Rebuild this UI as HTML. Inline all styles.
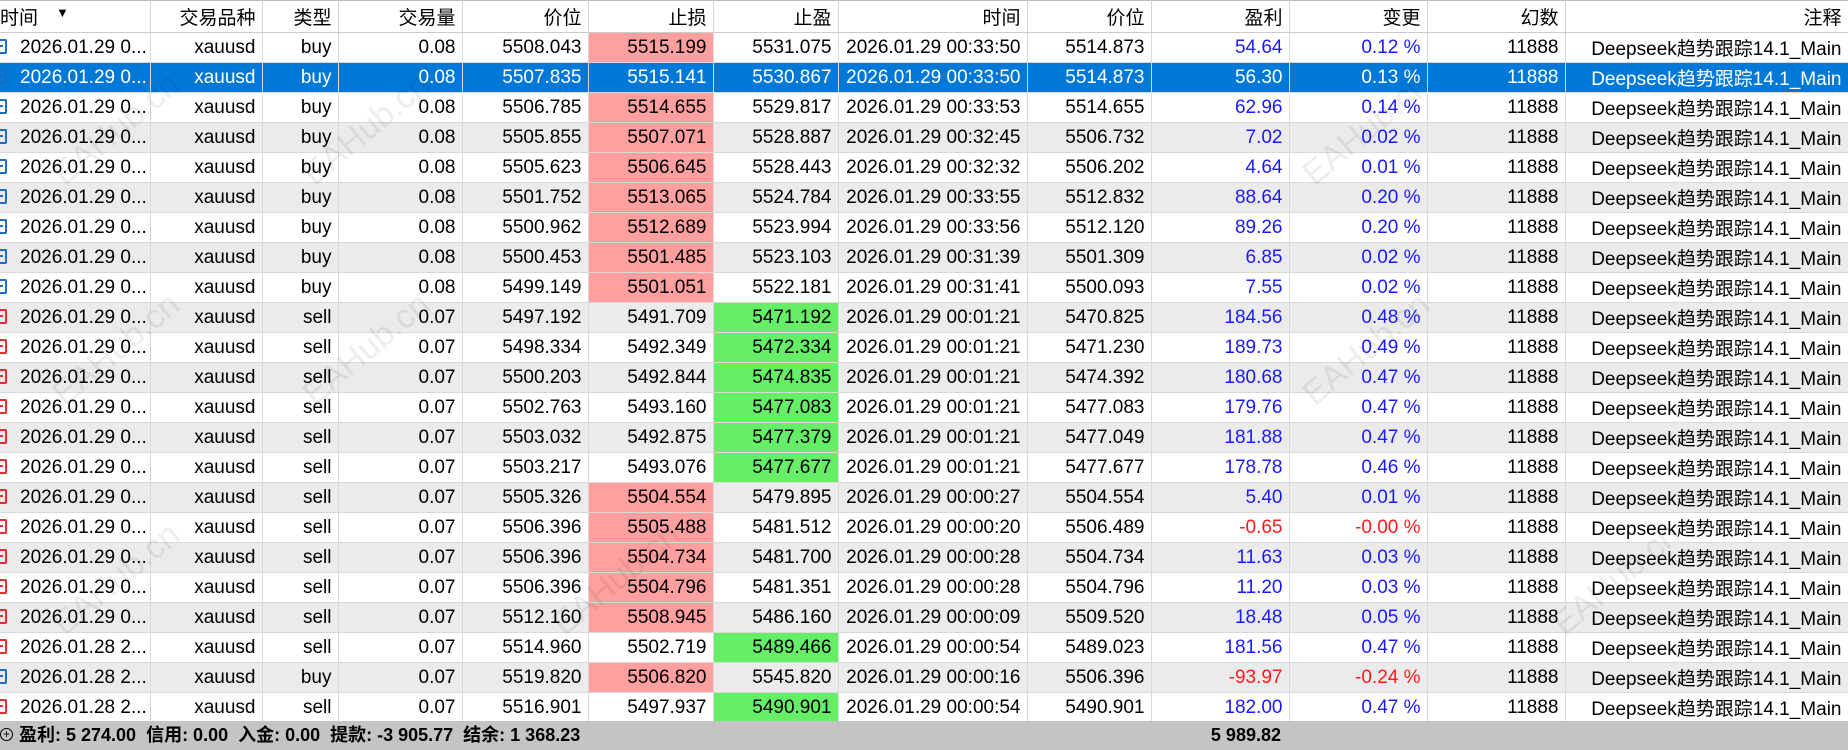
<!DOCTYPE html>
<html><head><meta charset="utf-8"><style>
body{margin:0;width:1848px;height:750px;overflow:hidden;background:#fff;font-family:"Liberation Sans","Noto Sans CJK SC",sans-serif;font-size:19px;color:#000;position:relative}
table{border-collapse:collapse;table-layout:fixed;position:absolute;left:0;top:0;width:1848px}
td,th{height:29px;padding:0 6px 0 0;border-right:1px solid #d9d9d9;border-bottom:1px solid #d9d9d9;text-align:right;white-space:nowrap;overflow:hidden;font-weight:normal}
th{height:31px;border-top:1px solid #bbb;border-bottom:1px solid #ccc;border-right:1px solid #d4d4d4}
td:first-child,th:first-child{text-align:left;padding-left:20px;position:relative}
th:first-child{padding-left:0}
tr:nth-child(odd) td{background:#ebebeb}
tr.sel td{background:#0078d7!important;color:#fff!important}
td.p{background:#ff9f9f!important}
td.g{background:#66ee66!important}
.b{color:#1a1aff}.r{color:#ff1a1a}
.ic{position:absolute;left:0;top:6px;width:7px;height:15px;border:2px solid #1e6fc4;border-left:none;border-radius:0 2px 2px 0;box-sizing:border-box}
.ic.s{border-color:#e03030}
.ic:after{content:"";position:absolute;left:0;top:4px;width:3px;height:2px;background:inherit;border-top:2px solid #1e6fc4}
.ic.s:after{border-top-color:#e03030}
.foot{position:absolute;left:0;top:721px;width:1848px;height:29px;background:#c4c4c4;font-weight:bold;line-height:29px;font-size:18px}
.wm{position:absolute;color:rgba(0,0,0,0.07);font-size:34px;transform:rotate(-40deg);pointer-events:none}
</style></head><body>
<table>
<colgroup><col style="width:150px"><col style="width:112px"><col style="width:76px"><col style="width:124px"><col style="width:126px"><col style="width:125px"><col style="width:125px"><col style="width:189px"><col style="width:124px"><col style="width:138px"><col style="width:138px"><col style="width:138px"><col style="width:283px"></colgroup>
<tr style="background:#fff"><th style="background:#fff">时间<span style="position:absolute;left:56px;top:4px;font-size:13px">▼</span></th><th style="background:#fff">交易品种</th><th style="background:#fff">类型</th><th style="background:#fff">交易量</th><th style="background:#fff">价位</th><th style="background:#fff">止损</th><th style="background:#fff">止盈</th><th style="background:#fff">时间</th><th style="background:#fff">价位</th><th style="background:#fff">盈利</th><th style="background:#fff">变更</th><th style="background:#fff">幻数</th><th style="background:#fff">注释</th></tr>
<tr><td><i class="ic"></i>2026.01.29 0...</td><td>xauusd</td><td>buy</td><td>0.08</td><td>5508.043</td><td class="p">5515.199</td><td>5531.075</td><td>2026.01.29 00:33:50</td><td>5514.873</td><td class="b">54.64</td><td class="b">0.12 %</td><td>11888</td><td>Deepseek趋势跟踪14.1_Main</td></tr>
<tr class="sel"><td><i class="ic"></i>2026.01.29 0...</td><td>xauusd</td><td>buy</td><td>0.08</td><td>5507.835</td><td>5515.141</td><td>5530.867</td><td>2026.01.29 00:33:50</td><td>5514.873</td><td>56.30</td><td>0.13 %</td><td>11888</td><td>Deepseek趋势跟踪14.1_Main</td></tr>
<tr><td><i class="ic"></i>2026.01.29 0...</td><td>xauusd</td><td>buy</td><td>0.08</td><td>5506.785</td><td class="p">5514.655</td><td>5529.817</td><td>2026.01.29 00:33:53</td><td>5514.655</td><td class="b">62.96</td><td class="b">0.14 %</td><td>11888</td><td>Deepseek趋势跟踪14.1_Main</td></tr>
<tr><td><i class="ic"></i>2026.01.29 0...</td><td>xauusd</td><td>buy</td><td>0.08</td><td>5505.855</td><td class="p">5507.071</td><td>5528.887</td><td>2026.01.29 00:32:45</td><td>5506.732</td><td class="b">7.02</td><td class="b">0.02 %</td><td>11888</td><td>Deepseek趋势跟踪14.1_Main</td></tr>
<tr><td><i class="ic"></i>2026.01.29 0...</td><td>xauusd</td><td>buy</td><td>0.08</td><td>5505.623</td><td class="p">5506.645</td><td>5528.443</td><td>2026.01.29 00:32:32</td><td>5506.202</td><td class="b">4.64</td><td class="b">0.01 %</td><td>11888</td><td>Deepseek趋势跟踪14.1_Main</td></tr>
<tr><td><i class="ic"></i>2026.01.29 0...</td><td>xauusd</td><td>buy</td><td>0.08</td><td>5501.752</td><td class="p">5513.065</td><td>5524.784</td><td>2026.01.29 00:33:55</td><td>5512.832</td><td class="b">88.64</td><td class="b">0.20 %</td><td>11888</td><td>Deepseek趋势跟踪14.1_Main</td></tr>
<tr><td><i class="ic"></i>2026.01.29 0...</td><td>xauusd</td><td>buy</td><td>0.08</td><td>5500.962</td><td class="p">5512.689</td><td>5523.994</td><td>2026.01.29 00:33:56</td><td>5512.120</td><td class="b">89.26</td><td class="b">0.20 %</td><td>11888</td><td>Deepseek趋势跟踪14.1_Main</td></tr>
<tr><td><i class="ic"></i>2026.01.29 0...</td><td>xauusd</td><td>buy</td><td>0.08</td><td>5500.453</td><td class="p">5501.485</td><td>5523.103</td><td>2026.01.29 00:31:39</td><td>5501.309</td><td class="b">6.85</td><td class="b">0.02 %</td><td>11888</td><td>Deepseek趋势跟踪14.1_Main</td></tr>
<tr><td><i class="ic"></i>2026.01.29 0...</td><td>xauusd</td><td>buy</td><td>0.08</td><td>5499.149</td><td class="p">5501.051</td><td>5522.181</td><td>2026.01.29 00:31:41</td><td>5500.093</td><td class="b">7.55</td><td class="b">0.02 %</td><td>11888</td><td>Deepseek趋势跟踪14.1_Main</td></tr>
<tr><td><i class="ic s"></i>2026.01.29 0...</td><td>xauusd</td><td>sell</td><td>0.07</td><td>5497.192</td><td>5491.709</td><td class="g">5471.192</td><td>2026.01.29 00:01:21</td><td>5470.825</td><td class="b">184.56</td><td class="b">0.48 %</td><td>11888</td><td>Deepseek趋势跟踪14.1_Main</td></tr>
<tr><td><i class="ic s"></i>2026.01.29 0...</td><td>xauusd</td><td>sell</td><td>0.07</td><td>5498.334</td><td>5492.349</td><td class="g">5472.334</td><td>2026.01.29 00:01:21</td><td>5471.230</td><td class="b">189.73</td><td class="b">0.49 %</td><td>11888</td><td>Deepseek趋势跟踪14.1_Main</td></tr>
<tr><td><i class="ic s"></i>2026.01.29 0...</td><td>xauusd</td><td>sell</td><td>0.07</td><td>5500.203</td><td>5492.844</td><td class="g">5474.835</td><td>2026.01.29 00:01:21</td><td>5474.392</td><td class="b">180.68</td><td class="b">0.47 %</td><td>11888</td><td>Deepseek趋势跟踪14.1_Main</td></tr>
<tr><td><i class="ic s"></i>2026.01.29 0...</td><td>xauusd</td><td>sell</td><td>0.07</td><td>5502.763</td><td>5493.160</td><td class="g">5477.083</td><td>2026.01.29 00:01:21</td><td>5477.083</td><td class="b">179.76</td><td class="b">0.47 %</td><td>11888</td><td>Deepseek趋势跟踪14.1_Main</td></tr>
<tr><td><i class="ic s"></i>2026.01.29 0...</td><td>xauusd</td><td>sell</td><td>0.07</td><td>5503.032</td><td>5492.875</td><td class="g">5477.379</td><td>2026.01.29 00:01:21</td><td>5477.049</td><td class="b">181.88</td><td class="b">0.47 %</td><td>11888</td><td>Deepseek趋势跟踪14.1_Main</td></tr>
<tr><td><i class="ic s"></i>2026.01.29 0...</td><td>xauusd</td><td>sell</td><td>0.07</td><td>5503.217</td><td>5493.076</td><td class="g">5477.677</td><td>2026.01.29 00:01:21</td><td>5477.677</td><td class="b">178.78</td><td class="b">0.46 %</td><td>11888</td><td>Deepseek趋势跟踪14.1_Main</td></tr>
<tr><td><i class="ic s"></i>2026.01.29 0...</td><td>xauusd</td><td>sell</td><td>0.07</td><td>5505.326</td><td class="p">5504.554</td><td>5479.895</td><td>2026.01.29 00:00:27</td><td>5504.554</td><td class="b">5.40</td><td class="b">0.01 %</td><td>11888</td><td>Deepseek趋势跟踪14.1_Main</td></tr>
<tr><td><i class="ic s"></i>2026.01.29 0...</td><td>xauusd</td><td>sell</td><td>0.07</td><td>5506.396</td><td class="p">5505.488</td><td>5481.512</td><td>2026.01.29 00:00:20</td><td>5506.489</td><td class="r">-0.65</td><td class="r">-0.00 %</td><td>11888</td><td>Deepseek趋势跟踪14.1_Main</td></tr>
<tr><td><i class="ic s"></i>2026.01.29 0...</td><td>xauusd</td><td>sell</td><td>0.07</td><td>5506.396</td><td class="p">5504.734</td><td>5481.700</td><td>2026.01.29 00:00:28</td><td>5504.734</td><td class="b">11.63</td><td class="b">0.03 %</td><td>11888</td><td>Deepseek趋势跟踪14.1_Main</td></tr>
<tr><td><i class="ic s"></i>2026.01.29 0...</td><td>xauusd</td><td>sell</td><td>0.07</td><td>5506.396</td><td class="p">5504.796</td><td>5481.351</td><td>2026.01.29 00:00:28</td><td>5504.796</td><td class="b">11.20</td><td class="b">0.03 %</td><td>11888</td><td>Deepseek趋势跟踪14.1_Main</td></tr>
<tr><td><i class="ic s"></i>2026.01.29 0...</td><td>xauusd</td><td>sell</td><td>0.07</td><td>5512.160</td><td class="p">5508.945</td><td>5486.160</td><td>2026.01.29 00:00:09</td><td>5509.520</td><td class="b">18.48</td><td class="b">0.05 %</td><td>11888</td><td>Deepseek趋势跟踪14.1_Main</td></tr>
<tr><td><i class="ic s"></i>2026.01.28 2...</td><td>xauusd</td><td>sell</td><td>0.07</td><td>5514.960</td><td>5502.719</td><td class="g">5489.466</td><td>2026.01.29 00:00:54</td><td>5489.023</td><td class="b">181.56</td><td class="b">0.47 %</td><td>11888</td><td>Deepseek趋势跟踪14.1_Main</td></tr>
<tr><td><i class="ic"></i>2026.01.28 2...</td><td>xauusd</td><td>buy</td><td>0.07</td><td>5519.820</td><td class="p">5506.820</td><td>5545.820</td><td>2026.01.29 00:00:16</td><td>5506.396</td><td class="r">-93.97</td><td class="r">-0.24 %</td><td>11888</td><td>Deepseek趋势跟踪14.1_Main</td></tr>
<tr><td><i class="ic s"></i>2026.01.28 2...</td><td>xauusd</td><td>sell</td><td>0.07</td><td>5516.901</td><td>5497.937</td><td class="g">5490.901</td><td>2026.01.29 00:00:54</td><td>5490.901</td><td class="b">182.00</td><td class="b">0.47 %</td><td>11888</td><td>Deepseek趋势跟踪14.1_Main</td></tr>
</table>
<div class="wm" style="left:40px;top:110px">EAHub.cn</div>
<div class="wm" style="left:290px;top:110px">EAHub.cn</div>
<div class="wm" style="left:1290px;top:110px">EAHub.cn</div>
<div class="wm" style="left:40px;top:330px">EAHub.cn</div>
<div class="wm" style="left:290px;top:330px">EAHub.cn</div>
<div class="wm" style="left:1290px;top:330px">EAHub.cn</div>
<div class="wm" style="left:40px;top:560px">EAHub.cn</div>
<div class="wm" style="left:540px;top:560px">EAHub.cn</div>
<div class="wm" style="left:1540px;top:560px">EAHub.cn</div>
<div class="foot"><span style="position:absolute;left:0;top:7px;width:13px;height:13px;border:1.5px solid #000;border-radius:50%;box-sizing:border-box;font-size:12px;line-height:10px;text-align:center;font-weight:normal">+</span><span style="position:absolute;left:19px">盈利: 5 274.00&nbsp; 信用: 0.00&nbsp; 入金: 0.00&nbsp; 提款: -3 905.77&nbsp; 结余: 1 368.23</span><span style="position:absolute;right:567px">5 989.82</span></div>
</body></html>
